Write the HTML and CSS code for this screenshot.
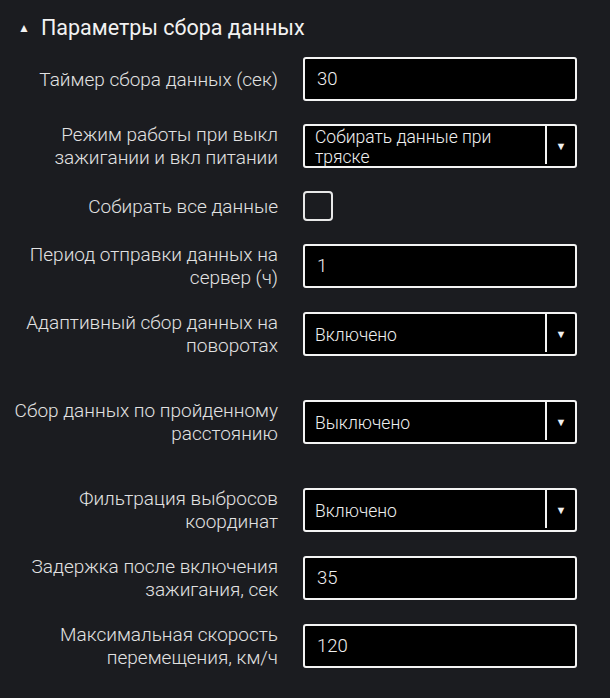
FILE: index.html
```html
<!DOCTYPE html>
<html lang="ru">
<head>
    <meta charset="UTF-8">
    <meta name="viewport" content="width=device-width, initial-scale=1.0">
    <title>Параметры сбора данных</title>
    <link rel="stylesheet" href="styles.css">
</head>
<body>
    <div class="section">
        <div class="section-title">
            <span class="toggle">&#9650;</span>
            <span>Параметры сбора данных</span>
        </div>
        <div class="form">
            <div class="row">
                <label class="label">Таймер сбора данных (сек)</label>
                <input class="field" type="text" value="30">
            </div>
            <div class="row">
                <label class="label">Режим работы при выкл зажигании и вкл питании</label>
                <div class="select">
                    <span class="select-text">Собирать данные при тряске</span>
                    <span class="select-arrow">&#9660;</span>
                </div>
            </div>
            <div class="row">
                <label class="label">Собирать все данные</label>
                <div class="check-cell"><span class="checkbox"></span></div>
            </div>
            <div class="row">
                <label class="label">Период отправки данных на сервер (ч)</label>
                <input class="field" type="text" value="1">
            </div>
            <div class="row spaced">
                <label class="label">Адаптивный сбор данных на поворотах</label>
                <div class="select">
                    <span class="select-text">Включено</span>
                    <span class="select-arrow">&#9660;</span>
                </div>
            </div>
            <div class="row spaced">
                <label class="label">Сбор данных по пройденному расстоянию</label>
                <div class="select">
                    <span class="select-text">Выключено</span>
                    <span class="select-arrow">&#9660;</span>
                </div>
            </div>
            <div class="row">
                <label class="label">Фильтрация выбросов координат</label>
                <div class="select">
                    <span class="select-text">Включено</span>
                    <span class="select-arrow">&#9660;</span>
                </div>
            </div>
            <div class="row">
                <label class="label">Задержка после включения зажигания, сек</label>
                <input class="field" type="text" value="35">
            </div>
            <div class="row">
                <label class="label">Максимальная скорость перемещения, км/ч</label>
                <input class="field" type="text" value="120">
            </div>
        </div>
    </div>
</body>
</html>
```

FILE: styles.css
```css
body {
    margin: 0;
    padding: 0;
    background-color: #1b1c20;
    color: #e2e2e2;
    font-family: Roboto, "Noto Sans", sans-serif;
    font-size: 19px;
    font-weight: 300;
}
.section {
    padding: 12px 0 20px 8px;
}
.section-title {
    display: flex;
    align-items: center;
    gap: 11px;
    height: 30px;
    padding-left: 10px;
    font-size: 21.5px;
    font-weight: 400;
    color: #f2f2f2;
}
.toggle {
    font-size: 12px;
    line-height: 1;
    margin-top: 1px;
}
.form {
    display: flex;
    flex-direction: column;
    gap: 22px;
    margin-top: 15px;
}
.row {
    display: grid;
    grid-template-columns: 270px 274px;
    column-gap: 25px;
    align-items: center;
}
.row.spaced {
    margin-bottom: 20px;
}
.label {
    text-align: right;
    line-height: 23px;
}
.field {
    box-sizing: border-box;
    width: 274px;
    height: 44px;
    margin: 0;
    padding: 0 12px;
    background-color: #000;
    border: 2px solid #f4f4f4;
    border-radius: 3px;
    color: #f0f0f0;
    font-family: Roboto, sans-serif;
    font-size: 18.5px;
    font-weight: 300;
    outline: none;
}
.select {
    box-sizing: border-box;
    display: flex;
    width: 274px;
    height: 44px;
    background-color: #000;
    border: 2px solid #f4f4f4;
    border-radius: 3px;
    font-size: 17.5px;
    color: #f0f0f0;
}
.select-text {
    flex: 1;
    display: flex;
    align-items: center;
    padding: 3px 10px 0;
    line-height: 20px;
    border-right: 2px solid #f4f4f4;
    margin-bottom: 2px;
}
.select-arrow {
    width: 28px;
    display: flex;
    align-items: center;
    justify-content: center;
    font-size: 11px;
}
.check-cell {
    display: flex;
    align-items: center;
    height: 30px;
}
.checkbox {
    box-sizing: border-box;
    width: 30px;
    height: 30px;
    border: 2px solid #e8e8e8;
    border-radius: 4px;
}
```
